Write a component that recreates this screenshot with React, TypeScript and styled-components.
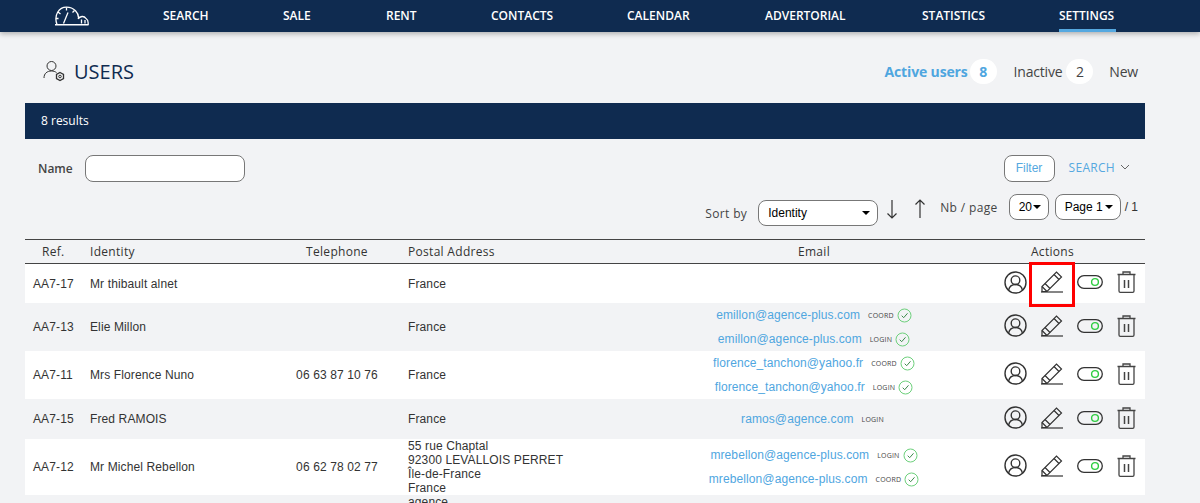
import React from "react";
import styled, { createGlobalStyle } from "styled-components";

const Global = createGlobalStyle`
  html, body { margin: 0; padding: 0; height: 100%; overflow: hidden; background: #f2f3f5; }
  body { font-family: "Open Sans", "Liberation Sans", sans-serif; color: #333; }
  * { box-sizing: border-box; }
`;

const Page = styled.div`width: 1200px; height: 503px; overflow: hidden;`;
const Nav = styled.nav`
  height: 32px; background: #0f2b50; box-shadow: 0 2px 5px rgba(0,0,0,.28);
  display: flex; align-items: stretch; position: relative; padding-left: 54px;
`;
const Logo = styled.div`width: 109px; display: flex; align-items: center;`;
const NavList = styled.div`display: flex; gap: 0; align-items: stretch;`;
const NavItem = styled.a<{ $w: number; $active?: boolean }>`
  width: ${p => p.$w}px; text-align: left; color: #fff; font-size: 12px; font-weight: 600;
  line-height: 31px; white-space: nowrap; position: relative;
  ${p => p.$active ? `&::after { content: ""; position: absolute; left: 0; width: 57px; bottom: 0; height: 3px; background: #55a8e0; }` : ""}
`;
const Main = styled.main`padding: 0 55px 0 25px;`;
const TitleRow = styled.div`height: 71px; display: flex; align-items: center; justify-content: space-between; padding: 7px 7px 0 18px;`;
const Title = styled.h1`margin: 0; display: flex; align-items: center; gap: 8px; font-size: 20px; font-weight: 500; color: #0f2b50;`;
const Tabs = styled.div`display: flex; align-items: center; font-size: 14px;`;
const Tab = styled.span<{ $active?: boolean; $gap?: number }>`
  color: ${p => p.$active ? "#4fa6df" : "#444"}; font-weight: ${p => p.$active ? 700 : 400};
  letter-spacing: ${p => p.$active ? "-.15px" : "-.2px"};
  margin-left: ${p => p.$gap ?? 0}px; display: flex; align-items: center;
`;
const Count = styled.b<{ $active?: boolean }>`
  width: 27px; height: 25px; border-radius: 13px; background: #fff; display: flex; align-items: center; justify-content: center;
  font-weight: ${p => p.$active ? 700 : 400}; font-size: 14px; margin-left: ${p => p.$active ? 2 : 4}px;
`;
const Banner = styled.div`height: 36px; background: #0f2b50; color: #fff; font-size: 12px; font-weight: 500; padding-left: 16px; line-height: 35px;`;
const FilterRow = styled.div`height: 55px; display: flex; align-items: center; padding: 3px 0 0 13px;`;
const Label = styled.label`font-size: 12px; font-weight: 600; color: #444; margin-right: 12px;`;
const Input = styled.div`width: 160px; height: 27px; background: #fff; border: 1px solid #777; border-radius: 8px;`;
const FilterBtn = styled.button`
  margin-left: auto; width: 51px; height: 27px; background: #fff; border: 1px solid #777; border-radius: 8px;
  color: #55a8e0; font: 12px "Liberation Sans", sans-serif; padding: 0;
`;
const SearchLink = styled.a`color: #55a8e0; font-size: 12px; font-weight: 500; letter-spacing: .3px; margin: 0 15px 0 14px; display: flex; align-items: center; gap: 5px; position: relative; top: -1px;`;
const SortRow = styled.div`height: 45px; display: flex; align-items: flex-start; padding-right: 7px; justify-content: flex-end; font-size: 12px;`;
const SortLabel = styled.span`font-weight: 500; letter-spacing: .35px; color: #444; margin: 11px 11px 0 0;`;
const SelectBox = styled.div<{ $w: number; $top: number; $gap?: number }>`
  width: ${p => p.$w}px; height: 26px; margin-top: ${p => p.$top}px; margin-left: ${p => p.$gap ?? 0}px; background: #fff; border: 1px solid #777; border-radius: 8px;
  display: flex; align-items: center; justify-content: space-between; padding: 0 7px 0 9px; font: 12px "Liberation Sans", sans-serif; color: #000;
`;
const Caret = styled.i`width: 0; height: 0; border: 4px solid transparent; border-top: 4px solid #000; border-bottom: 0;`;
const Arrows = styled.div`display: flex; gap: 16px; margin: 5px 14px 0 8px; height: 24px;`;
const NbLabel = styled.span`font-weight: 500; letter-spacing: .35px; color: #444; margin: 5px 11px 0 0;`;
const PageOf = styled.span`margin: 6px 0 0 4px; font: 12px "Liberation Sans", sans-serif; color: #333;`;

const Row = styled.div<{ $h: number; $white?: boolean; $head?: boolean }>`
  display: grid; grid-template-columns: 58px 193px 122px 252px 328px 167px; height: ${p => p.$h}px; align-items: center;
  background: ${p => p.$white ? "#fff" : "transparent"};
  font: 12px "Liberation Sans", sans-serif; letter-spacing: .12px; color: #333;
  ${p => p.$head ? `border-top: 1px solid #444; border-bottom: 1px solid #444; font: 500 12px "Open Sans", sans-serif; letter-spacing: .3px; color: #333;` : ""}
`;
const Ref = styled.div<{ $head?: boolean }>`padding-left: ${p => p.$head ? 17 : 8}px;`;
const Identity = styled.div`padding-left: 7px;`;
const Phone = styled.div`text-align: center; padding-right: 0;`;
const Address = styled.div`padding-left: 10px; line-height: 14px;`;
const Email = styled.div`text-align: center; display: flex; flex-direction: column; gap: 4px; align-items: center;`;
const HeadActions = styled.div`text-align: center; padding-right: 18px;`;
const Mail = styled.div`display: flex; align-items: center; justify-content: center; height: 20px; color: #4fa6df; letter-spacing: .1px;`;
const Tag = styled.span`font: 500 7px "Open Sans", sans-serif; letter-spacing: .2px; color: #444; margin: 1px 3px 0 8px;`;
const Actions = styled.div`display: flex; align-items: center; justify-content: flex-end; padding: 0 9px 3px 0; gap: 14px;`;
const IconCell = styled.span`display: flex; position: relative;`;
const Highlight = styled.span`position: absolute; left: -12px; top: -9px; width: 46px; height: 45px; border: 3px solid #f00;`;

const Check = () => (
  <svg width="15" height="15" viewBox="0 0 15 15" fill="none" stroke="#6dd07c" strokeWidth="1"><circle cx="7.500" cy="7.500" r="6.500" /><path d="M4.700 7.700l2 2 3.800-4.400" stroke="#3d8a4c" /></svg>
);
const UserIcon = () => (
  <svg width="23" height="23" viewBox="0 0 23 23" fill="none" stroke="#333" strokeWidth="1.400"><circle cx="11.500" cy="11.500" r="10.500" /><circle cx="11.500" cy="9.200" r="4.300" /><path d="M4.600 19c.8-3.600 3.600-5.500 6.900-5.500s6.100 1.900 6.900 5.500" /></svg>
);
const Pencil = () => (
  <svg width="22" height="22" viewBox="0 0 22 22" fill="none" stroke="#333" strokeWidth="1.200"><path d="M0 21h22" /><path d="M1 20.500V15.500L15.500 1l5 5L6 20.500z" /><path d="M1 15.500l5 5M13 3.500l5 5M4 12.500l5 5" /></svg>
);
const Toggle = () => (
  <svg width="26" height="14" viewBox="0 0 26 14" fill="none"><rect x=".7" y=".7" width="24.600" height="12.600" rx="6.300" stroke="#333" strokeWidth="1.300" /><circle cx="18" cy="7" r="3.400" stroke="#2ecc40" strokeWidth="1.400" /></svg>
);
const Trash = () => (
  <svg width="19" height="22" viewBox="0 0 19 22" fill="none" stroke="#444" strokeWidth="1.300"><path d="M.5 3.500h18M6 3.500V1h7v2.500M2 3.500V20c0 .8.5 1.300 1.300 1.300h12.400c.8 0 1.300-.5 1.300-1.300V3.500" /><path d="M7.500 9v8M11.500 9v8" strokeWidth="1.500" /></svg>
);
const ActionIcons = ({ highlight }: { highlight?: boolean }) => (
  <Actions>
    <IconCell><UserIcon /></IconCell>
    <IconCell>{highlight && <Highlight />}<Pencil /></IconCell>
    <IconCell><Toggle /></IconCell>
    <IconCell><Trash /></IconCell>
  </Actions>
);

type M = { a: string; t: string; c: boolean };
const rows: { id: string; n: string; p?: string; addr: string[]; h: number; w: boolean; m: M[] }[] = [
  { id: "AA7-17", n: "Mr thibault alnet", addr: ["France"], h: 39, w: true, m: [] },
  { id: "AA7-13", n: "Elie Millon", addr: ["France"], h: 48, w: false, m: [{ a: "emillon@agence-plus.com", t: "COORD", c: true }, { a: "emillon@agence-plus.com", t: "LOGIN", c: true }] },
  { id: "AA7-11", n: "Mrs Florence Nuno", p: "06 63 87 10 76", addr: ["France"], h: 48, w: true, m: [{ a: "florence_tanchon@yahoo.fr", t: "COORD", c: true }, { a: "florence_tanchon@yahoo.fr", t: "LOGIN", c: true }] },
  { id: "AA7-15", n: "Fred RAMOIS", addr: ["France"], h: 40, w: false, m: [{ a: "ramos@agence.com", t: "LOGIN", c: false }] },
  { id: "AA7-12", n: "Mr Michel Rebellon", p: "06 62 78 02 77", addr: ["55 rue Chaptal", "92300 LEVALLOIS PERRET", "Île-de-France", "France"], h: 56, w: true, m: [{ a: "mrebellon@agence-plus.com", t: "LOGIN", c: true }, { a: "mrebellon@agence-plus.com", t: "COORD", c: true }] },
];

export default function App() {
  return (
    <Page>
      <Global />
      <Nav>
        <Logo>
          <svg width="35" height="20" viewBox="0 0 35 20" fill="none" stroke="#fff" strokeWidth="1.300">
            <path d="M3 18.500C-.5 9 5 1.200 12.500 1.200S25 7 24.500 12.500" />
            <path d="M9.500 17.500L14 6.500M12.500 1.500v3M4 6l2.500 2M20.500 4.500L18.500 6.500M2 12.500h2.500" />
            <path d="M24 13c2-3 6-3.500 8-.5 1.800 1 2.500 3.500 2 6.500" />
            <path d="M27.500 13.500v4M31 14v3.500" />
            <path d="M1 18.700h33.500" strokeWidth="1.500" />
          </svg>
        </Logo>
        <NavList>
          <NavItem $w={120}>SEARCH</NavItem>
          <NavItem $w={103}>SALE</NavItem>
          <NavItem $w={105}>RENT</NavItem>
          <NavItem $w={136}>CONTACTS</NavItem>
          <NavItem $w={138}>CALENDAR</NavItem>
          <NavItem $w={157}>ADVERTORIAL</NavItem>
          <NavItem $w={137}>STATISTICS</NavItem>
          <NavItem $w={60} $active>SETTINGS</NavItem>
        </NavList>
      </Nav>
      <Main>
        <TitleRow>
          <Title>
            <svg width="23" height="23" viewBox="0 0 23 23" fill="none" stroke="#333" strokeWidth="1">
              <circle cx="8.500" cy="6" r="4.500" /><path d="M1 18c0-4.500 3-7 7.500-7 2 0 3.500.5 5 1.500" />
              <path d="M17 12.500l3.500 2v4l-3.500 2-3.500-2v-4z" strokeWidth="1.300" /><circle cx="17" cy="16.500" r="1.300" />
            </svg>
            USERS
          </Title>
          <Tabs>
            <Tab $active>Active users<Count $active>8</Count></Tab>
            <Tab $gap={17}>Inactive<Count>2</Count></Tab>
            <Tab $gap={16}>New</Tab>
          </Tabs>
        </TitleRow>
        <Banner>8 results</Banner>
        <FilterRow>
          <Label>Name</Label>
          <Input />
          <FilterBtn>Filter</FilterBtn>
          <SearchLink>SEARCH
            <svg width="10" height="6" viewBox="0 0 10 6" fill="none" stroke="#666"><path d="M1 1l4 4 4-4" /></svg>
          </SearchLink>
        </FilterRow>
        <SortRow>
          <SortLabel>Sort by</SortLabel>
          <SelectBox $w={120} $top={6}>Identity<Caret /></SelectBox>
          <Arrows>
            <svg width="12" height="20" viewBox="0 0 12 20" fill="none" stroke="#333" strokeWidth="1.200"><path d="M6 1v18M1.500 14.500L6 19l4.500-4.500" /></svg>
            <svg width="12" height="20" viewBox="0 0 12 20" fill="none" stroke="#333" strokeWidth="1.200"><path d="M6 19V1M1.500 5.500L6 1l4.500 4.500" /></svg>
          </Arrows>
          <NbLabel>Nb / page</NbLabel>
          <SelectBox $w={40} $top={0}>20<Caret /></SelectBox>
          <SelectBox $w={66} $top={0} $gap={6}>Page 1<Caret /></SelectBox>
          <PageOf>/ 1</PageOf>
        </SortRow>
        <Row $h={25} $head>
          <Ref $head>Ref.</Ref><Identity>Identity</Identity><Phone>Telephone</Phone><Address>Postal Address</Address>
          <Email>Email</Email><HeadActions>Actions</HeadActions>
        </Row>
        {rows.map((r, i) => (
          <Row key={r.id} $h={r.h} $white={r.w}>
            <Ref>{r.id}</Ref>
            <Identity>{r.n}</Identity>
            <Phone>{r.p}</Phone>
            <Address>{r.addr.map(a => <div key={a}>{a}</div>)}</Address>
            <Email>
              {r.m.map(m => (
                <Mail key={m.t}>{m.a}<Tag>{m.t}</Tag>{m.c && <Check />}</Mail>
              ))}
            </Email>
            <ActionIcons highlight={i === 0} />
          </Row>
        ))}
        <Row $h={14}>
          <div /><div /><div /><Address>agence</Address>
        </Row>
      </Main>
    </Page>
  );
}
